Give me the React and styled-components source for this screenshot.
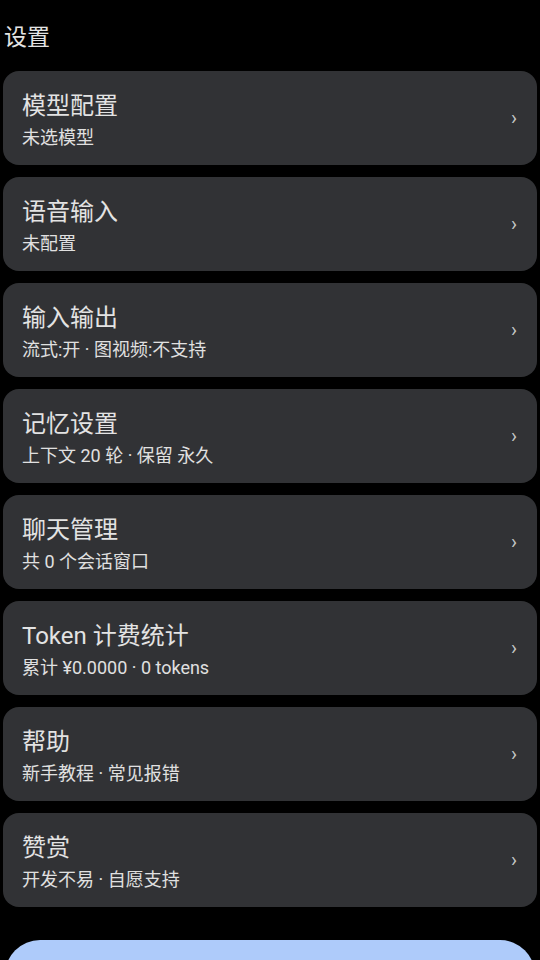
import styled, { createGlobalStyle } from "styled-components";

const GlobalStyle = createGlobalStyle`
  html, body {
    margin: 0;
    padding: 0;
    background: #000;
  }
  body {
    font-family: Roboto, "Noto Sans CJK SC", sans-serif;
    color: #e3e3e3;
  }
`;

const Page = styled.div`
  display: flex;
  flex-direction: column;
  padding: 23px 3px 0;
  height: 960px;
  box-sizing: border-box;
  overflow: hidden;
`;

const Header = styled.h1`
  margin: 0 0 18px 1px;
  font-size: 23px;
  font-weight: 400;
  line-height: 30px;
  color: #e3e3e3;
`;

const List = styled.div`
  display: flex;
  flex-direction: column;
  gap: 12px;
`;

const Card = styled.div`
  display: flex;
  align-items: center;
  height: 94px;
  padding: 0 20px 0 19px;
  box-sizing: border-box;
  background: #313235;
  border-radius: 16px;
`;

const Texts = styled.div`
  flex: 1;
  align-self: flex-start;
  padding-top: 20px;
  display: flex;
  flex-direction: column;
  gap: 4px;
`;

const Title = styled.div`
  font-size: 24px;
  line-height: 31px;
  color: #e3e3e3;
`;

const Sub = styled.div`
  font-size: 18px;
  line-height: 24px;
  color: #e0e0e0;
`;

const Chevron = styled.span`
  font-size: 20px;
  color: #c4c7c5;
  line-height: 1;
`;

const Button = styled.div`
  margin: 33px 2px 0;
  height: 70px;
  flex-shrink: 0;
  background: #aecbfa;
  border-radius: 35px;
`;

const items = [
  ["模型配置", "未选模型"],
  ["语音输入", "未配置"],
  ["输入输出", "流式:开 · 图视频:不支持"],
  ["记忆设置", "上下文 20 轮 · 保留 永久"],
  ["聊天管理", "共 0 个会话窗口"],
  ["Token 计费统计", "累计 ¥0.0000 · 0 tokens"],
  ["帮助", "新手教程 · 常见报错"],
  ["赞赏", "开发不易 · 自愿支持"],
];

export default function App() {
  return (
    <>
      <GlobalStyle />
      <Page>
        <Header>设置</Header>
        <List>
          {items.map(([t, s]) => (
            <Card key={t}>
              <Texts>
                <Title>{t}</Title>
                <Sub>{s}</Sub>
              </Texts>
              <Chevron>›</Chevron>
            </Card>
          ))}
        </List>
        <Button />
      </Page>
    </>
  );
}
